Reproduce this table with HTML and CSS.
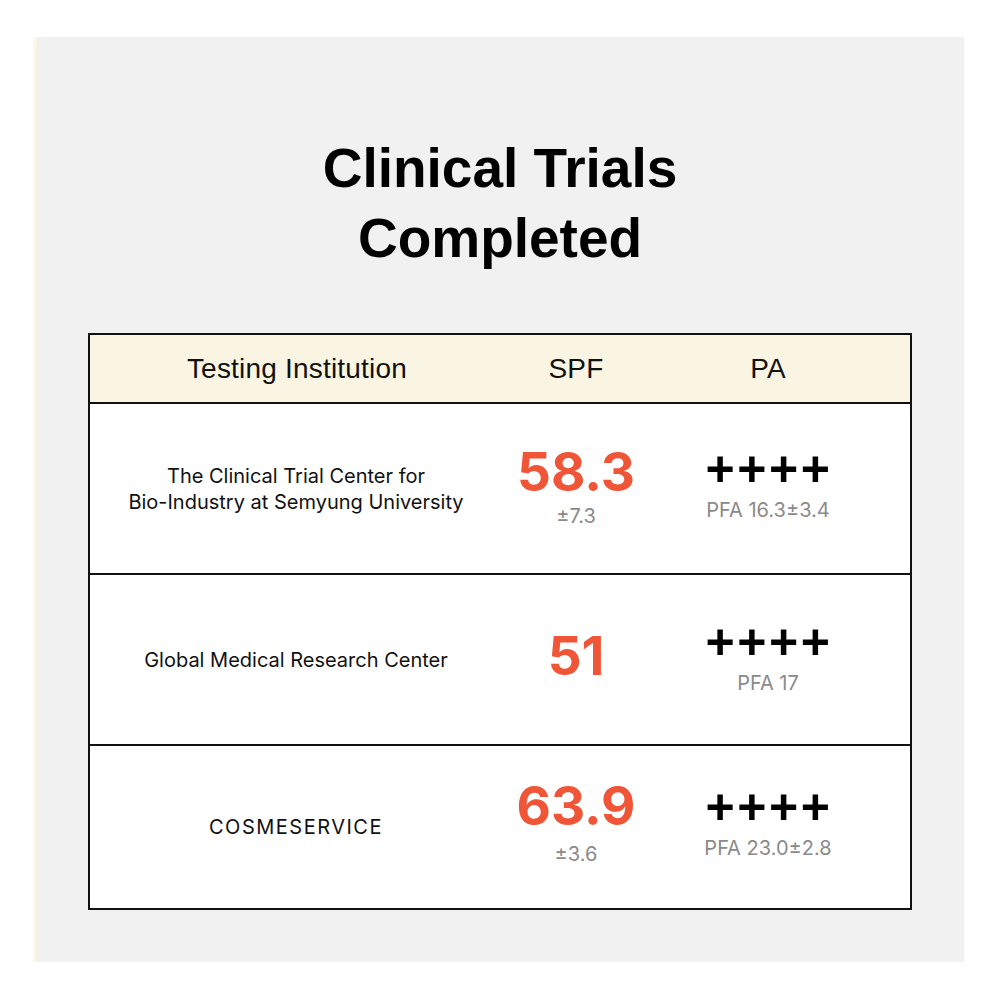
FILE: index.html
```html
<!DOCTYPE html>
<html>
<head>
<meta charset="utf-8">
<link rel="stylesheet" href="styles.css">
</head>
<body>
<div class="panel">
  <h1 class="title">Clinical Trials<br>Completed</h1>
  <div class="table">
    <div class="row head">
      <div class="cell c1">Testing Institution</div>
      <div class="cell c2">SPF</div>
      <div class="cell c3">PA</div>
    </div>
    <div class="row body r1">
      <div class="cell c1 inst">The Clinical Trial Center for<br>Bio-Industry at Semyung University</div>
      <div class="cell c2"><div class="spf">58.3</div><div class="sub">±7.3</div></div>
      <div class="cell c3"><div class="pa">++++</div><div class="sub">PFA 16.3±3.4</div></div>
    </div>
    <div class="row body r2">
      <div class="cell c1 inst">Global Medical Research Center</div>
      <div class="cell c2"><div class="spf">51</div></div>
      <div class="cell c3"><div class="pa">++++</div><div class="sub">PFA 17</div></div>
    </div>
    <div class="row body r3">
      <div class="cell c1 inst caps">COSMESERVICE</div>
      <div class="cell c2"><div class="spf">63.9</div><div class="sub">±3.6</div></div>
      <div class="cell c3"><div class="pa">++++</div><div class="sub">PFA 23.0±2.8</div></div>
    </div>
  </div>
</div>
</body>
</html>
```
FILE: styles.css
```css
html, body { margin: 0; padding: 0; background: #ffffff; }
* { box-sizing: border-box; }
body { width: 1000px; height: 1000px; padding-top: 37px; }
.panel {
  margin-left: 34px;
  width: 930px;
  height: 925px;
  background: #f1f1f1;
  border-left: 3px solid #fbf5e6;
  padding: 96px 0 0 51px;
}
.title {
  margin: 0;
  width: 824px;
  text-align: center;
  font-family: "Liberation Sans", Arial, sans-serif;
  font-weight: 700;
  font-size: 55px;
  line-height: 70px;
  color: #000;
}
.title + .table { margin-top: 60px; }
.table {
  width: 824px;
  border: 2px solid #111;
  background: #fff;
}
.row {
  display: grid;
  grid-template-columns: 412px 148px 1fr;
  align-items: center;
}
.head {
  height: 69px;
  background: #faf5e3;
  border-bottom: 2px solid #111;
  font-family: "Liberation Sans", Arial, sans-serif;
  font-size: 28px;
  letter-spacing: 0.2px;
  color: #111;
}
.body { border-bottom: 2px solid #111; }
.r1, .r2 { height: 171px; }
.r3 { height: 162px; border-bottom: none; }
.cell { text-align: center; }
.c3 { padding-right: 24px; }
.head .c1 { padding-left: 2px; }
.inst {
  font-family: Inter, "Noto Sans", sans-serif;
  font-size: 20px;
  line-height: 26px;
  color: #111;
}
.caps { letter-spacing: 1.5px; }
.spf {
  font-family: Inter, "Liberation Sans", sans-serif;
  font-weight: 700;
  font-size: 53px;
  line-height: 52px;
  color: #ef5536;
}
.pa {
  font-family: "Liberation Sans", Arial, sans-serif;
  font-weight: 700;
  font-size: 50px;
  line-height: 46px;
  letter-spacing: 2.5px;
  padding-left: 2px;
  color: #000;
  margin-bottom: 6px;
}
.sub {
  font-family: Inter, "Noto Sans", sans-serif;
  font-size: 20px;
  line-height: 24px;
  color: #8a8a8a;
}
.c2 .sub { margin-top: 10px; }
.r1 .c2 .sub { margin-top: 6px; }
.r1 .spf { margin-top: -4px; }
.r3 .spf { margin-top: -8px; }
.r2 .spf { margin-top: -8px; }
.r1 .pa, .r3 .pa { margin-top: -10px; }
.r2 .pa { margin-top: -6px; }
```
